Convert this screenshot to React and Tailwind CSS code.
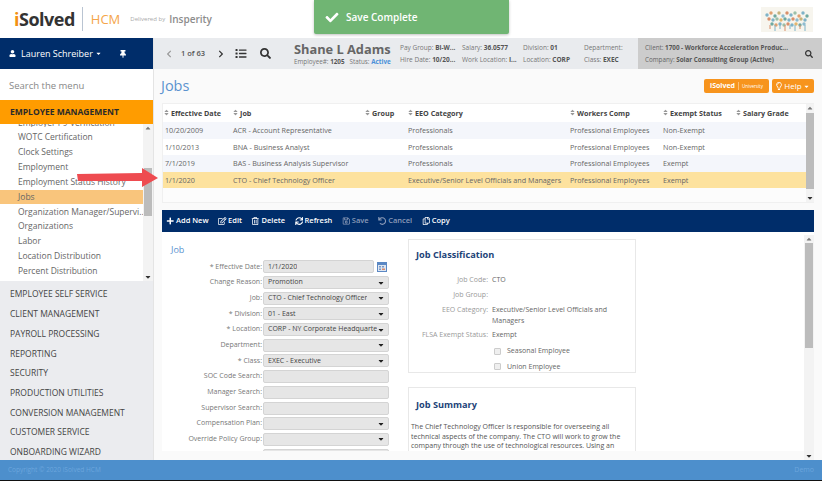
import {
  FaUser,
  FaThumbtack,
  FaList,
  FaSearch,
  FaPlus,
  FaRegEdit,
  FaRegTrashAlt,
  FaSync,
  FaRegSave,
  FaUndo,
  FaRegCopy,
  FaRegLightbulb,
  FaCheck,
  FaSort,
  FaChevronLeft,
  FaChevronRight,
  FaCaretDown,
  FaCaretUp,
} from "react-icons/fa";

const menuItems = [
  "WOTC Certification",
  "Clock Settings",
  "Employment",
  "Employment Status History",
  "Jobs",
  "Organization Manager/Supervi...",
  "Organizations",
  "Labor",
  "Location Distribution",
  "Percent Distribution",
];

const bottomMenu = [
  "EMPLOYEE SELF SERVICE",
  "CLIENT MANAGEMENT",
  "PAYROLL PROCESSING",
  "REPORTING",
  "SECURITY",
  "PRODUCTION UTILITIES",
  "CONVERSION MANAGEMENT",
  "CUSTOMER SERVICE",
  "ONBOARDING WIZARD",
];

const rows = [
  ["10/20/2009", "ACR - Account Representative", "", "Professionals", "Professional Employees", "Non-Exempt", "bg-[#f4f6fb] h-[17px]"],
  ["1/10/2013", "BNA - Business Analyst", "", "Professionals", "Professional Employees", "Non-Exempt", "bg-white h-[16px]"],
  ["7/1/2019", "BAS - Business Analysis Supervisor", "", "Professionals", "Professional Employees", "Exempt", "bg-[#f4f6fb] h-[17px]"],
  ["1/1/2020", "CTO - Chief Technology Officer", "", "Executive/Senior Level Officials and Managers", "Professional Employees", "Exempt", "bg-[#fde29e] h-[16px]"],
];

const formRows = [
  ["* Effective Date:", "1/1/2020", "date"],
  ["Change Reason:", "Promotion", "select"],
  ["Job:", "CTO - Chief Technology Officer", "select"],
  ["* Division:", "01 - East", "select"],
  ["* Location:", "CORP - NY Corporate Headquarte", "select"],
  ["Department:", "", "select"],
  ["* Class:", "EXEC - Executive", "select"],
  ["SOC Code Search:", "", "text"],
  ["Manager Search:", "", "text"],
  ["Supervisor Search:", "", "text"],
  ["Compensation Plan:", "", "select"],
  ["Override Policy Group:", "", "select"],
  ["Notes:", "", "text"],
];

const colorDots = [
  [6, 8, "#7fb3c8"], [10, 6, "#e0a070"], [14, 9, "#6fa8a0"], [18, 6, "#c8b27a"], [22, 9, "#8fbcd0"], [26, 6, "#d98f6a"],
  [30, 8, "#7fb3c8"], [34, 6, "#9cc0a8"], [38, 9, "#e0a070"], [42, 6, "#7fb3c8"], [46, 9, "#6fa8a0"],
  [8, 12, "#d98f6a"], [12, 13, "#7fb3c8"], [16, 12, "#9cc0a8"], [20, 13, "#e3b66f"], [24, 12, "#6fa8a0"], [28, 13, "#7fb3c8"],
  [32, 12, "#d98f6a"], [36, 13, "#8fbcd0"], [40, 12, "#c8b27a"], [44, 13, "#7fb3c8"],
  [11, 17, "#6fa8a0"], [15, 18, "#e0a070"], [19, 17, "#7fb3c8"], [23, 18, "#9cc0a8"], [27, 17, "#d98f6a"], [31, 18, "#7fb3c8"],
  [35, 17, "#e3b66f"], [39, 18, "#6fa8a0"], [43, 17, "#8fbcd0"],
];

function Scrollbar({ thumbTop, thumbHeight, className }) {
  return (
    <div className={`flex flex-col items-center bg-[#f3f3f3] ${className}`}>
      <FaCaretUp className="h-[8px] w-[8px] shrink-0 text-[#777]" />
      <div className="relative w-full flex-1">
        <div className="mx-auto w-[8px] bg-[#bcbcbc]" style={{ marginTop: thumbTop, height: thumbHeight }} />
      </div>
      <FaCaretDown className="h-[8px] w-[8px] shrink-0 text-[#333]" />
    </div>
  );
}

function HeaderCell({ className, label }) {
  return (
    <div className={`flex items-center gap-[2px] font-bold text-[#444] ${className}`}>
      <FaSort className="h-[7px] w-[5px] text-[#999]" />
      <span>{label}</span>
    </div>
  );
}

function TableSection() {
  return (
    <div className="mx-[8px] flex h-[100px] border border-[#f0f0f0] bg-[#fcfcfc] text-[7.2px]">
      <div className="flex-1">
        <div className="flex h-[18px] items-center bg-white">
          <HeaderCell className="w-[70px] pl-[1px]" label="Effective Date" />
          <HeaderCell className="w-[132px]" label="Job" />
          <HeaderCell className="w-[43px]" label="Group" />
          <HeaderCell className="w-[162px]" label="EEO Category" />
          <HeaderCell className="w-[93px]" label="Workers Comp" />
          <HeaderCell className="w-[73px]" label="Exempt Status" />
          <HeaderCell className="w-[70px]" label="Salary Grade" />
        </div>
        {rows.map((r) => (
          <div key={r[0]} className={`flex items-center text-[#666] ${r[6]}`}>
            <div className="w-[70px] pl-[2px]">{r[0]}</div>
            <div className="w-[132px]">{r[1]}</div>
            <div className="w-[43px]">{r[2]}</div>
            <div className="w-[162px] whitespace-nowrap">{r[3]}</div>
            <div className="w-[93px] whitespace-nowrap">{r[4]}</div>
            <div className="w-[73px]">{r[5]}</div>
          </div>
        ))}
      </div>
      <Scrollbar className="w-[10px]" thumbTop={1} thumbHeight={76} />
    </div>
  );
}

function Toolbar() {
  const items = [
    [FaPlus, "Add New", "text-white"],
    [FaRegEdit, "Edit", "text-white"],
    [FaRegTrashAlt, "Delete", "text-white"],
    [FaSync, "Refresh", "text-white"],
    [FaRegSave, "Save", "text-[#8b9bb8]"],
    [FaUndo, "Cancel", "text-[#8b9bb8]"],
    [FaRegCopy, "Copy", "text-white"],
  ];
  return (
    <div className="mx-[8px] mt-[7px] flex h-[22px] items-center gap-[9.5px] bg-[#002d6a] pl-[4px] text-[7.5px] font-semibold">
      {items.map(([Icon, label, color]) => (
        <div key={label} className={`flex items-center gap-[1.5px] ${color}`}>
          <Icon className="h-[8px] w-[8.5px]" />
          <span>{label}</span>
        </div>
      ))}
    </div>
  );
}

function FormField({ label, value, type }) {
  return (
    <div className="flex h-[15.7px] items-center text-[7px]">
      <div className="w-[100px] whitespace-nowrap pr-[1px] text-right text-[#777]">{label}</div>
      <div className="flex items-center">
        <div
          className={`flex h-[13px] items-center justify-between overflow-hidden rounded-[2px] border border-[#d4d4d4] bg-[#e6e6e6] pl-[4px] pr-[3px] text-[#444] ${
            type === "date" ? "w-[111px]" : "w-[126px]"
          }`}
        >
          <span className="overflow-hidden whitespace-nowrap">{value}</span>
          {type === "select" && <FaCaretDown className="h-[8px] w-[8px] shrink-0 text-[#222]" />}
        </div>
        {type === "date" && (
          <svg viewBox="0 0 10 10" className="ml-[3px] h-[10px] w-[10px]">
            <rect x="0" y="0" width="10" height="10" fill="#5b88c4" />
            <rect x="1" y="3" width="8" height="6" fill="#dfe6f0" />
            <rect x="2" y="4" width="2" height="1.5" fill="#7a9ac8" />
            <rect x="5" y="4" width="2" height="1.5" fill="#7a9ac8" />
            <rect x="2" y="6.5" width="2" height="1.5" fill="#7a9ac8" />
            <rect x="5" y="6.5" width="3" height="1.5" fill="#d98a6a" />
          </svg>
        )}
      </div>
    </div>
  );
}

function ClassRow({ label, value }) {
  return (
    <div className="flex text-[7px] leading-[10.5px]">
      <div className="w-[79px] shrink-0 text-right text-[#999]">{label}</div>
      <div className="pl-[4px] text-[#666]">{value}</div>
    </div>
  );
}

function CheckRow({ label }) {
  return (
    <div className="flex h-[15.5px] items-center pl-[85px] text-[7px] text-[#666]">
      <span className="mr-[6px] h-[7px] w-[7px] rounded-[1px] border border-[#ccc] bg-[#efefef]" />
      {label}
    </div>
  );
}

function FormSection() {
  return (
    <div className="mx-[8px] flex h-[219px] overflow-hidden bg-white">
      <div className="w-[246px] shrink-0 pl-[1px]">
        <div className="h-[27px] pl-[8px] pt-[12px] text-[9px] leading-[12px] text-[#5b93cf]">Job</div>
        <div>
          {formRows.map((f) => (
            <FormField key={f[0]} label={f[0]} value={f[1]} type={f[2]} />
          ))}
        </div>
      </div>
      <div className="flex w-[228px] shrink-0 flex-col pt-[7px]">
        <div className="h-[134px] shrink-0 border border-[#e8e8e8] bg-white">
          <div className="pl-[7px] pt-[8px] text-[9.2px] font-bold leading-[14px] text-[#1d4378]">Job Classification</div>
          <div className="pt-[13px]">
            <ClassRow label="Job Code:" value="CTO" />
            <div className="h-[4px]" />
            <ClassRow label="Job Group:" value="" />
            <div className="h-[5px]" />
            <ClassRow label="EEO Category:" value="Executive/Senior Level Officials and Managers" />
            <div className="h-[4px]" />
            <ClassRow label="FLSA Exempt Status:" value="Exempt" />
            <div className="h-[3px]" />
            <CheckRow label="Seasonal Employee" />
            <CheckRow label="Union Employee" />
          </div>
        </div>
        <div className="mt-[14px] flex-1 border border-[#e8e8e8] bg-white">
          <div className="pl-[7px] pt-[10px] text-[9.2px] font-bold leading-[14px] text-[#1d4378]">Job Summary</div>
          <p className="m-0 px-[2px] pt-[10px] text-[7px] leading-[9.5px] text-[#555]">
            The Chief Technology Officer is responsible for overseeing all technical aspects of the company. The CTO will work to grow the company through the use of technological resources. Using an
            outward-oriented perspective, the CTO will align strategies and support IT
          </p>
        </div>
      </div>
      <div className="flex-1" />
    </div>
  );
}

export default function App() {
  return (
    <div className="relative flex h-[481px] w-[822px] flex-col overflow-hidden bg-white font-['Open_Sans',sans-serif]">
      {/* top logo strip */}
      <header className="flex h-[38px] shrink-0 items-center justify-between bg-white pl-[14px] pr-[9px]">
        <div className="flex items-center">
          <span className="text-[18px] font-bold leading-none tracking-[-0.5px] text-[#333]">
            <span className="text-[#f29111]">i</span>Solved
          </span>
          <span className="ml-[7px] mr-[8px] h-[24px] w-[1px] bg-[#b9c4d2]" />
          <span className="text-[13px] leading-none text-[#f5a54a]">HCM</span>
          <span className="ml-[10px] text-[6px] text-[#aaa]">Delivered by</span>
          <span className="ml-[4px] text-[10px] font-semibold text-[#8c8c8c]">Insperity</span>
        </div>
        <svg viewBox="0 0 52 25" className="h-[25px] w-[52px] bg-[#f7f5ee]">
          {colorDots.map(([x, y, c], i) => (
            <circle key={i} cx={x} cy={y} r="1.7" fill={c} />
          ))}
          {[9, 14, 19, 24, 29, 34, 39, 44].map((x, i) => (
            <line key={x} x1={x} y1="18" x2={x} y2={i % 2 ? 24 : 22} stroke={i % 3 ? "#7fb3c8" : "#d98f6a"} strokeWidth="1" />
          ))}
        </svg>
      </header>

      <div className="flex min-h-0 flex-1">
        {/* left menu */}
        <aside className="flex w-[153px] shrink-0 flex-col bg-[#ebecef]">
          <div className="flex h-[31px] shrink-0 items-center bg-[#002d6a] pl-[9px] text-[9px] text-white">
            <FaUser className="h-[7px] w-[7px]" />
            <span className="ml-[5px] whitespace-nowrap">Lauren Schreiber</span>
            <FaCaretDown className="ml-[2px] h-[7px] w-[7px]" />
            <FaThumbtack className="ml-[17px] h-[8px] w-[8px]" />
          </div>
          <div className="flex h-[31px] shrink-0 items-center bg-white pl-[9px] pt-[4px] text-[9.5px] text-[#888]">Search the menu</div>
          <div className="flex h-[24px] shrink-0 items-center bg-[#ff9c00] pl-[10px] text-[8.5px] font-bold text-[#2a2a2a]">EMPLOYEE MANAGEMENT</div>
          <div className="flex h-[157px] shrink-0 overflow-hidden bg-white">
            <div className="w-[143px] shrink-0">
              <div className="mb-[3px] flex h-[3px] items-end overflow-hidden pl-[18px] text-[8.5px] leading-[8px] text-[#666]">Employer I-9 Verification</div>
              {menuItems.map((item) => (
                <div
                  key={item}
                  className={`flex h-[14.9px] items-center whitespace-nowrap pl-[18px] text-[8.5px] text-[#666] ${item === "Jobs" ? "bg-[#f9c57c]" : ""}`}
                >
                  {item}
                </div>
              ))}
            </div>
            <Scrollbar className="w-[10px]" thumbTop={36} thumbHeight={48} />
          </div>
          <div className="flex-1 pt-[4px]">
            {bottomMenu.map((item) => (
              <div key={item} className="flex h-[19.7px] items-center pl-[10px] text-[8.5px] text-[#444]">
                {item}
              </div>
            ))}
          </div>
        </aside>

        {/* main */}
        <main className="flex min-w-0 flex-1 flex-col border-l border-[#e4e4e4] bg-[#fafafa]">
          <div className="flex h-[31px] shrink-0 bg-[#e9ebee]">
            <div className="flex flex-1 items-center text-[#555]">
              <FaChevronLeft className="ml-[12px] h-[8px] w-[6px] shrink-0 text-[#999]" />
              <span className="ml-[9px] w-[24px] shrink-0 whitespace-nowrap text-[7.5px] font-semibold">1 of 63</span>
              <FaChevronRight className="ml-[13px] h-[8px] w-[6px] shrink-0 text-[#333]" />
              <FaList className="ml-[11px] h-[11px] w-[12px] shrink-0 text-[#333]" />
              <FaSearch className="ml-[13px] h-[11px] w-[11px] shrink-0 text-[#333]" />
              <div className="ml-[23px] w-[106px] shrink-0">
                <div className="whitespace-nowrap text-[12.8px] font-bold leading-[15px] text-[#666]">Shane L Adams</div>
                <div className="whitespace-nowrap text-[6.3px] leading-[9px] text-[#777]">
                  Employee#: <b className="text-[#555]">1205</b>
                  <span className="ml-[5px]">Status: </span>
                  <b className="text-[#4a90d9]">Active</b>
                </div>
              </div>
              <div className="grid grid-cols-[62px_61px_61px_54px] gap-y-[3px] text-[6.5px] leading-[9px] text-[#777]">
                <div className="whitespace-nowrap">Pay Group: <b className="text-[#555]">Bi-W...</b></div>
                <div>Salary: <b className="text-[#555]">36.0577</b></div>
                <div>Division: <b className="text-[#555]">01</b></div>
                <div>Department:</div>
                <div className="whitespace-nowrap">Hire Date: <b className="text-[#555]">10/20...</b></div>
                <div className="whitespace-nowrap">Work Location: <b className="text-[#555]">I...</b></div>
                <div>Location: <b className="text-[#555]">CORP</b></div>
                <div>Class: <b className="text-[#555]">EXEC</b></div>
              </div>
            </div>
            <div className="flex w-[184px] shrink-0 items-center justify-between bg-[#cccccc] pl-[7px] pr-[9px] text-[6.3px] leading-[9px] text-[#666]">
              <div className="flex flex-col gap-[3px] whitespace-nowrap">
                <div>Client: <b className="text-[#555]">1700 - Workforce Acceleration Produc...</b></div>
                <div>Company: <b className="text-[#555]">Solar Consulting Group (Active)</b></div>
              </div>
              <FaSearch className="h-[8px] w-[8px] text-[#333]" />
            </div>
          </div>

          <div className="flex h-[34px] shrink-0 items-center justify-between pl-[7px] pr-[8px]">
            <h1 className="m-0 text-[14.5px] font-normal text-[#5b93cf]">Jobs</h1>
            <div className="flex items-center gap-[3px] text-white">
              <div className="flex h-[14px] w-[65px] items-center justify-center rounded-[2px] bg-[#f7941d] text-[7px] font-bold">
                iSolved
                <span className="mx-[3px] h-[8px] w-[1px] bg-[#fbbf77]" />
                <span className="text-[4.5px] font-normal">University</span>
              </div>
              <div className="flex h-[14px] w-[42px] items-center justify-center rounded-[2px] bg-[#f7941d] text-[8px]">
                <FaRegLightbulb className="mr-[2px] h-[8px] w-[6px]" />
                Help
                <FaCaretDown className="ml-[1px] h-[7px] w-[7px]" />
              </div>
            </div>
          </div>

          <TableSection />
          <Toolbar />
          <FormSection />
        </main>
      </div>

      <footer className="flex h-[21px] shrink-0 items-center justify-between border-b border-[#111] bg-[#4d8fcc] pl-[8px] pr-[8px] text-[6.5px] text-[#6ca6dd]">
        <span>Copyright © 2020 iSolved HCM</span>
        <span className="text-[7px]">Demo</span>
      </footer>

      {/* page scrollbar over the form */}
      <Scrollbar className="absolute left-[804px] top-[235px] h-[225px] w-[10px]" thumbTop={0} thumbHeight={105} />

      {/* toast */}
      <div className="absolute left-[314px] top-0 flex h-[34px] w-[195px] items-center rounded-b-[2px] bg-[#70b573] pl-[10px] pt-[1px] text-[10px] font-semibold text-white shadow-[0_1px_3px_rgba(0,0,0,0.25)]">
        <FaCheck className="mr-[6px] h-[13px] w-[16px]" />
        Save Complete
      </div>

      {/* callout arrow */}
      <svg viewBox="0 0 82 20" className="absolute left-[77px] top-[168px] h-[20px] w-[82px]">
        <polygon points="0,6 65,5 65,0 81,10 65,19 65,13 1,13" fill="#ee4b50" />
      </svg>
    </div>
  );
}
